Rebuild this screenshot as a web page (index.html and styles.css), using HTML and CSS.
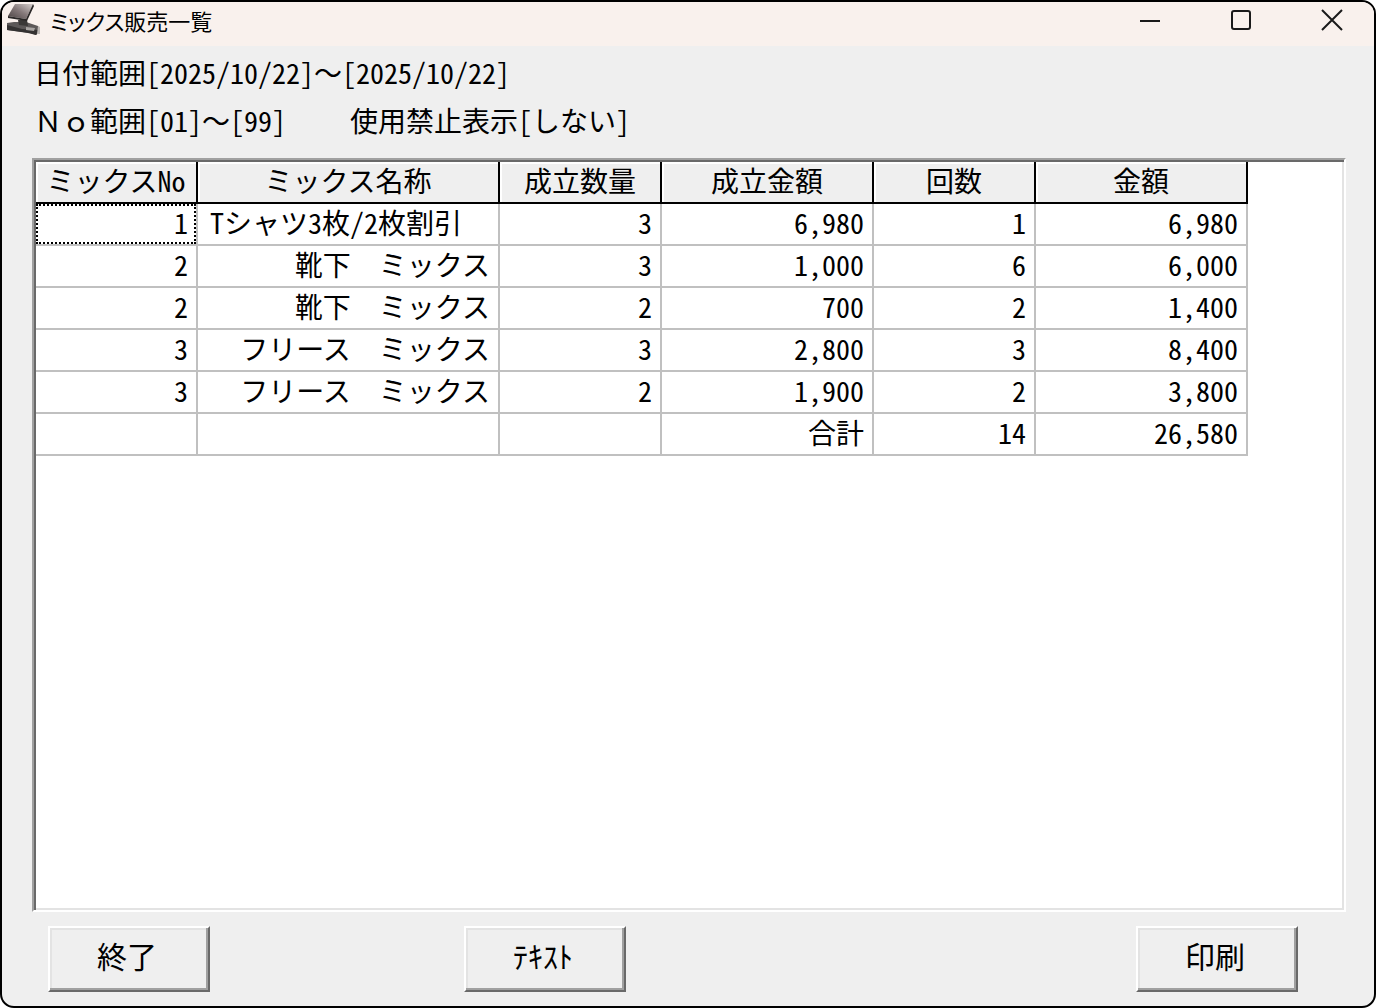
FILE: index.html
```html
<!DOCTYPE html>
<html lang="ja">
<head>
  <meta charset="UTF-8" />
  <meta name="viewport" content="width=device-width, initial-scale=1" />
  <title>ミックス販売一覧</title>
  <link rel="stylesheet" href="styles.css">
</head>
<body>
  <div class="window">
    <header class="titlebar">
      <svg class="app-icon" width="34" height="34" viewBox="0 0 34 34" aria-hidden="true">
        <defs>
          <linearGradient id="screen" x1="0" y1="1" x2="1" y2="0">
            <stop offset="0" stop-color="#4a4242" />
            <stop offset="0.5" stop-color="#85797a" />
            <stop offset="1" stop-color="#d6cfcc" />
          </linearGradient>
        </defs>
        <path d="M1 20 L8 19 L20 19 L32 23 L34 29 L30 32 L24 30 L1 27 Z" fill="#5c5858" />
        <path d="M12 17 L21 17 L22 23 L13 22 Z" fill="#3a3837" />
        <path d="M1 22 L16 26 L33 27 L30 32 L22 30 L1 27 Z" fill="#343232" />
        <path d="M20 24 L29 25 L28 28 L20 27 Z" fill="#a8a4a2" />
        <path d="M32 23 L34 24 L34 31 L31 31 Z" fill="#bdb8b5" />
        <path d="M9 1 L27 1 L20 16 L2 13 Z" fill="url(#screen)" />
        <path d="M27 1 L28 3 L21 18 L2 15 L2 13 L20 16 Z" fill="#2b2828" />
      </svg>
      <h1>ミックス販売一覧</h1>
      <div class="window-controls">
        <button type="button" aria-label="最小化">
          <svg width="22" height="22" viewBox="0 0 22 22"><path d="M1 12H21" /></svg>
        </button>
        <button type="button" aria-label="最大化">
          <svg width="22" height="22" viewBox="0 0 22 22"><rect x="2" y="2" width="18" height="18" rx="2" /></svg>
        </button>
        <button type="button" aria-label="閉じる">
          <svg width="22" height="22" viewBox="0 0 22 22"><path d="M1 1L21 21M21 1L1 21" /></svg>
        </button>
      </div>
    </header>

    <div class="conditions">
      <p><span>日付範囲[2025/10/22]<span class="wide">～</span>[2025/10/22]</span></p>
      <p><span><span class="wide">Ｎｏ</span>範囲[01]<span class="wide">～</span>[99]</span><span>使用禁止表示[しない]</span></p>
    </div>

    <main class="grid-panel">
      <table>
        <colgroup>
          <col class="col-s"><col class="col-l"><col class="col-s">
          <col class="col-m"><col class="col-s"><col class="col-m">
        </colgroup>
        <thead>
          <tr><th>ミックスNo</th><th>ミックス名称</th><th>成立数量</th><th>成立金額</th><th>回数</th><th>金額</th></tr>
        </thead>
        <tbody>
          <tr><td class="focused"><div>1</div></td><td>Tシャツ3枚/2枚割引  </td><td>3</td><td>6,980</td><td>1</td><td>6,980</td></tr>
          <tr><td>2</td><td class="wide">靴下&#12288;ミックス</td><td>3</td><td>1,000</td><td>6</td><td>6,000</td></tr>
          <tr><td>2</td><td class="wide">靴下&#12288;ミックス</td><td>2</td><td>700</td><td>2</td><td>1,400</td></tr>
          <tr><td>3</td><td class="wide">フリース&#12288;ミックス</td><td>3</td><td>2,800</td><td>3</td><td>8,400</td></tr>
          <tr><td>3</td><td class="wide">フリース&#12288;ミックス</td><td>2</td><td>1,900</td><td>2</td><td>3,800</td></tr>
          <tr><td></td><td></td><td></td><td>合計</td><td>14</td><td>26,580</td></tr>
        </tbody>
      </table>
    </main>

    <footer class="actions">
      <button type="button">終了</button>
      <button type="button">ﾃｷｽﾄ</button>
      <button type="button" class="print">印刷</button>
    </footer>
  </div>
</body>
</html>
```

FILE: styles.css
```css
:root {
  --face: #efefef;
  --line: #c0c0c0;
  --shadow: #a0a0a0;
  --dark: #696969;
  --light: #e3e3e3;
}

* {
  box-sizing: border-box;
}

body {
  margin: 0;
  background: #fff;
  color: #000;
  font-family: "Noto Sans CJK JP", sans-serif;
  font-size: 28px;
  line-height: 36px;
  font-feature-settings: "hwid";
}

/* keep full-width forms at full width */
.wide {
  font-feature-settings: normal;
}

.window {
  display: flex;
  flex-direction: column;
  min-height: 100vh;
  border: 2px solid #000;
  border-radius: 14px;
  background: var(--face);
  overflow: hidden;
}

/* title bar */
.titlebar {
  display: flex;
  align-items: center;
  height: 44px;
  padding: 0 0 8px 4px;
  background: #f9f1ed;
}

.titlebar h1 {
  margin: 0 0 0 10px;
  font-size: 22px;
  font-weight: 400;
  line-height: 36px;
  font-feature-settings: "palt";
}

.window-controls {
  display: flex;
  gap: 7px;
  margin-left: auto;
}

.window-controls button {
  display: flex;
  align-items: center;
  justify-content: center;
  width: 84px;
  height: 36px;
  padding: 0;
  border: none;
  background: none;
}

.window-controls svg {
  fill: none;
  stroke: #1a1a1a;
  stroke-width: 2;
}

/* search conditions */
.conditions {
  padding: 2px 32px 14px;
}

.conditions p {
  display: flex;
  gap: 64px;
  margin: 0;
  line-height: 48px;
}

/* list */
.grid-panel {
  flex: 1;
  margin: 0 28px 0 30px;
  border: 2px solid;
  border-color: var(--shadow) #fff #fff var(--shadow);
  background: #fff;
  box-shadow: inset 2px 2px var(--dark), inset -2px -2px var(--light);
  padding: 2px;
}

table {
  table-layout: fixed;
  width: 1212px;
  border-collapse: separate;
  border-spacing: 0;
}

.col-s { width: 162px; }
.col-m { width: 212px; }
.col-l { width: 302px; }

th, td {
  height: 42px;
  padding: 0 0 4px;
  white-space: pre;
}

th {
  border-right: 2px solid #000;
  border-bottom: 2px solid #000;
  background: var(--face);
  box-shadow: inset 2px 2px #fff;
  font-weight: 400;
}

td {
  padding-right: 8px;
  border-right: 2px solid var(--line);
  border-bottom: 2px solid var(--line);
  text-align: right;
}

td.focused {
  padding: 0;
}

.focused div {
  height: 40px;
  padding-right: 6px;
  border: 2px dotted #000;
  line-height: 32px;
}

/* buttons */
.actions {
  display: flex;
  gap: 254px;
  padding: 14px 76px 14px 46px;
}

.actions button {
  width: 162px;
  height: 66px;
  padding: 0 4px 8px 0;
  border: 2px solid;
  border-color: #fff var(--dark) var(--dark) #fff;
  background: var(--face);
  box-shadow: inset -2px -2px var(--shadow), inset 2px 2px var(--light);
  color: #000;
  font-family: inherit;
  font-size: 30px;
  line-height: 40px;
}

.actions .print {
  margin-left: auto;
}
```
